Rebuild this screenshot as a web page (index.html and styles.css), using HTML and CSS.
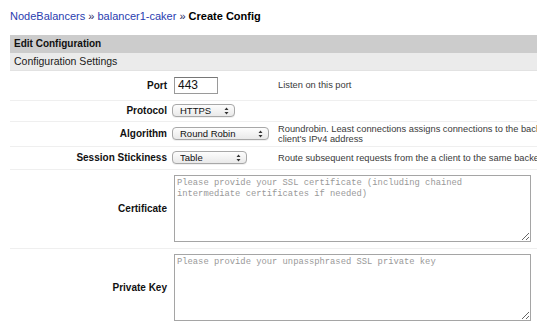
FILE: index.html
```html
<!DOCTYPE html>
<html>
<head>
<meta charset="utf-8">
<link rel="stylesheet" href="styles.css">
</head>
<body>
<div class="page">
  <div class="crumb"><a href="#">NodeBalancers</a> <span class="sep">»</span> <a href="#">balancer1-caker</a> <span class="sep">»</span> <b>Create Config</b></div>
  <div class="panel">
    <div class="section-head">Edit Configuration</div>
    <div class="sub-head">Configuration Settings</div>
    <table class="form">
      <colgroup><col class="c-label"><col class="c-ctrl"><col class="c-desc"></colgroup>
      <tr class="r-port">
        <th>Port</th>
        <td><input class="txt" type="text" value="443"></td>
        <td class="desc">Listen on this port</td>
      </tr>
      <tr class="r-proto">
        <th>Protocol</th>
        <td><select class="sel w-proto"><option>HTTPS</option></select></td>
        <td class="desc"></td>
      </tr>
      <tr class="r-algo">
        <th>Algorithm</th>
        <td><select class="sel w-algo"><option>Round Robin</option></select></td>
        <td class="desc">Roundrobin. Least connections assigns connections to the backend with the least connections. Source uses the<br>client's IPv4 address</td>
      </tr>
      <tr class="r-sess">
        <th>Session Stickiness</th>
        <td><select class="sel w-sess"><option>Table</option></select></td>
        <td class="desc">Route subsequent requests from the a client to the same backend</td>
      </tr>
      <tr class="r-cert">
        <th>Certificate</th>
        <td colspan="2"><textarea class="area" placeholder="Please provide your SSL certificate (including chained&#10;intermediate certificates if needed)"></textarea></td>
      </tr>
      <tr class="r-key">
        <th>Private Key</th>
        <td colspan="2"><textarea class="area" placeholder="Please provide your unpassphrased SSL private key"></textarea></td>
      </tr>
    </table>
  </div>
</div>
</body>
</html>
```
FILE: styles.css
```css
html, body {
  margin: 0;
  padding: 0;
  background: #fff;
}
body {
  font-family: "Liberation Sans", Arial, sans-serif;
  color: #111;
  overflow: hidden;
}
.page {
  padding: 9px 4px 0 10px;
  width: 527px;
}
.crumb {
  font-size: 11px;
  line-height: 14px;
  margin-bottom: 12px;
  white-space: nowrap;
}
.crumb a {
  color: #2a3db0;
  text-decoration: none;
}
.crumb .sep {
  color: #1d2560;
}
.crumb b {
  color: #000;
}
.panel {
  width: 527px;
  overflow: hidden;
}
.section-head {
  height: 18px;
  line-height: 18px;
  background: #cccccc;
  font-weight: bold;
  font-size: 10px;
  padding-left: 4px;
  color: #111;
}
.sub-head {
  height: 17px;
  line-height: 17px;
  background: #ebebeb;
  font-size: 10.5px;
  padding-left: 4px;
  border-bottom: 1px solid #e2e2e2;
  color: #1a1a1a;
}
.form {
  width: 527px;
  table-layout: fixed;
  border-collapse: collapse;
}
.c-label { width: 162px; }
.c-ctrl { width: 103px; }
.form th, .form td {
  padding: 0;
  border-bottom: 1px solid #efefef;
  vertical-align: middle;
}
.form th {
  text-align: right;
  font-size: 10px;
  font-weight: bold;
  padding-right: 5px;
  white-space: nowrap;
  color: #111;
}
.form .desc {
  font-size: 9.3px;
  line-height: 10px;
  color: #3a3a3a;
  white-space: nowrap;
  overflow: hidden;
  padding-left: 3px;
}
.r-port { height: 29px; }
.r-proto { height: 21px; }
.r-algo { height: 25px; }
.r-sess { height: 23px; }
.r-cert { height: 79px; }
.r-key { height: 79px; }

.txt {
  display: block;
  margin-left: 2px;
  box-sizing: border-box;
  width: 44px;
  height: 17px;
  border: 1px solid #9a9a9a;
  border-top-color: #777;
  padding: 0 3px;
  font-family: "Liberation Sans", Arial, sans-serif;
  font-size: 12px;
  color: #111;
}
.sel {
  display: block;
  -webkit-appearance: none;
  appearance: none;
  box-sizing: border-box;
  height: 13px;
  border: 1px solid #a8a8a8;
  border-radius: 4px;
  padding: 0 0 0 7px;
  font-family: "Liberation Sans", Arial, sans-serif;
  font-size: 9.5px;
  line-height: 11px;
  color: #111;
  background-color: #f6f6f6;
  background-image: url("data:image/svg+xml,%3Csvg xmlns='http://www.w3.org/2000/svg' width='5' height='8' viewBox='0 0 5 8'%3E%3Cpath d='M2.5 0.5 L4.5 3 L0.5 3 Z M0.5 5 L4.5 5 L2.5 7.5 Z' fill='%23333'/%3E%3C/svg%3E"), linear-gradient(#fdfdfd, #e9e9e9);
  background-repeat: no-repeat, no-repeat;
  background-position: right 5px center, 0 0;
  background-size: 5px 8px, 100% 100%;
  box-shadow: 0 1px 0 rgba(0,0,0,0.06);
}
.w-proto { width: 63px; }
.w-algo { width: 97px; }
.w-sess { width: 75px; }

.area {
  display: block;
  margin-left: 2px;
  box-sizing: border-box;
  width: 357px;
  height: 67px;
  border: 1px solid #a5a5a5;
  padding: 2px 2px;
  font-family: "Liberation Mono", "Courier New", monospace;
  font-size: 8.8px;
  line-height: 11px;
  color: #333;
  background: #fff;
}
.area::placeholder {
  color: #999;
}
```
